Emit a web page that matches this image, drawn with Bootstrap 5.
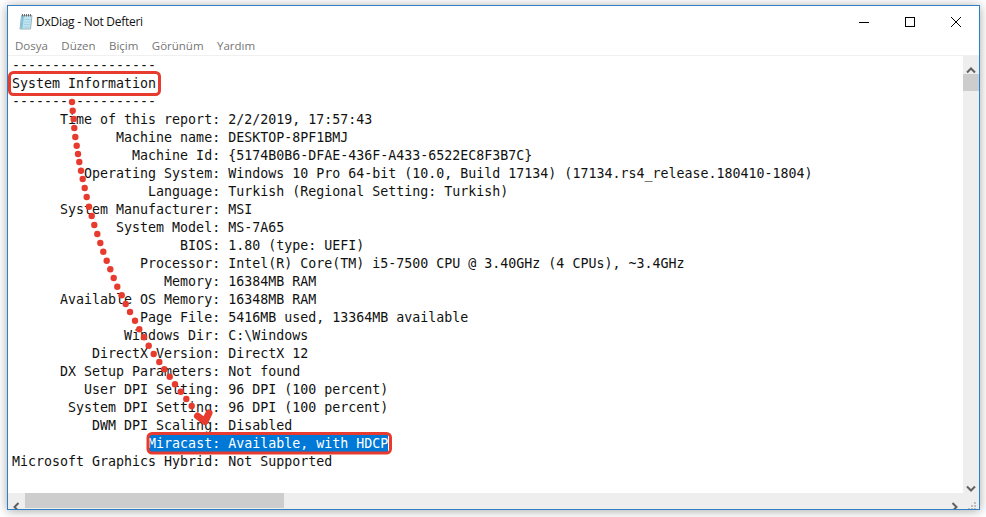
<!DOCTYPE html>
<html lang="tr">
<head>
<meta charset="utf-8">
<title>DxDiag - Not Defteri</title>
<link rel="stylesheet" href="https://cdn.jsdelivr.net/npm/bootstrap@5.3.0/dist/css/bootstrap.min.css">
<style>
html,body{height:517px;overflow:hidden;background:#fff}
body{padding:5px 6px 7px 7px;font-family:"Open Sans","Noto Sans",sans-serif}
.np-window{height:505px;border:1px solid #2f7fc6;box-shadow:0 1px 10px rgba(0,0,0,.35);background:#fff;position:relative}
.np-title{height:31px;padding-left:9px;font-size:12px;color:#111;letter-spacing:-.26px}
.np-logo{margin-right:3px}
.np-ctl{width:46px;height:31px}
.np-menu{height:18px;padding-left:7px;font-size:11.5px;color:#757575;gap:13.4px}
.np-sep{height:1px;background:#f0f0f0}
.np-body{min-height:0}
.np-text{font-family:"DejaVu Sans Mono","Liberation Mono",monospace;font-size:13.3px;line-height:18px;color:#111;margin:1px 0 0 4px;white-space:pre;overflow:hidden}
.np-sel{background:#0078d7;color:#fff;padding:1px 0}
.np-vbar{width:16px;background:#eee}
.np-hbar{height:16px;background:#eee}
.np-thumb-v{height:17px;background:#cdcdcd}
.np-thumb-h{width:259px;background:#cdcdcd;height:15px}
.np-arrow{width:16px;height:16px;flex:none}
.np-arrow-l{width:17px}
.np-vbar .np-arrow{height:18px}
.np-over{position:absolute;left:0;top:0;pointer-events:none}
</style>
</head>
<body>
<div class="np-window d-flex flex-column overflow-hidden">
  <div class="np-title d-flex align-items-center flex-shrink-0">
    <svg class="np-logo" width="16" height="18" viewBox="0 0 16 18"><path d="M4.500 2.500H15L13.500 16H3z" fill="#bfe4ef" stroke="#9db4bd"/><path d="M3.500 15.500L4.800 3H7L5.500 15.500z" fill="#7fc4da"/><path d="M7.500 6.500h6M7.200 9h6M7 11.500h6M6.700 14h6" stroke="#a2d4e4"/><path d="M5.500 1v2.500M7.500 1v2.500M9.500 1v2.500M11.500 1v2.500M13.500 1v2.500" stroke="#6b6b6b"/></svg>
    <span class="flex-grow-1">DxDiag - Not Defteri</span>
    <div class="np-ctl d-flex align-items-center justify-content-center"><svg width="10" height="10"><path d="M0 5.500h10" stroke="#000"/></svg></div>
    <div class="np-ctl d-flex align-items-center justify-content-center"><svg width="10" height="10"><rect x=".5" y=".5" width="9" height="9" fill="none" stroke="#000"/></svg></div>
    <div class="np-ctl d-flex align-items-center justify-content-center"><svg width="10" height="10"><path d="M0 0l10 10M10 0L0 10" stroke="#000"/></svg></div>
  </div>
  <div class="np-menu d-flex align-items-center flex-shrink-0"><span>Dosya</span><span>Düzen</span><span>Biçim</span><span>Görünüm</span><span>Yardım</span></div>
  <div class="np-sep flex-shrink-0"></div>
  <div class="np-body d-flex flex-grow-1">
    <div class="np-text flex-grow-1">------------------
System Information
------------------
      Time of this report: 2/2/2019, 17:57:43
             Machine name: DESKTOP-8PF1BMJ
               Machine Id: {5174B0B6-DFAE-436F-A433-6522EC8F3B7C}
         Operating System: Windows 10 Pro 64-bit (10.0, Build 17134) (17134.rs4_release.180410-1804)
                 Language: Turkish (Regional Setting: Turkish)
      System Manufacturer: MSI
             System Model: MS-7A65
                     BIOS: 1.80 (type: UEFI)
                Processor: Intel(R) Core(TM) i5-7500 CPU @ 3.40GHz (4 CPUs), ~3.4GHz
                   Memory: 16384MB RAM
      Available OS Memory: 16348MB RAM
                Page File: 5416MB used, 13364MB available
              Windows Dir: C:\Windows
          DirectX Version: DirectX 12
      DX Setup Parameters: Not found
         User DPI Setting: 96 DPI (100 percent)
       System DPI Setting: 96 DPI (100 percent)
          DWM DPI Scaling: Disabled
                 <span class="np-sel">Miracast: Available, with HDCP</span>
Microsoft Graphics Hybrid: Not Supported</div>
    <div class="np-vbar d-flex flex-column flex-shrink-0">
      <div class="np-arrow"><svg width="16" height="18"><path d="M4 11.500l4-4 4 4" fill="none" stroke="#606060" stroke-width="2"/></svg></div>
      <div class="np-thumb-v"></div>
      <div class="flex-grow-1"></div>
      <div class="np-arrow"><svg width="16" height="18"><path d="M4 6.500l4 4 4-4" fill="none" stroke="#606060" stroke-width="2"/></svg></div>
    </div>
  </div>
  <div class="np-hbar d-flex flex-shrink-0">
    <div class="np-arrow np-arrow-l"><svg width="16" height="16"><path d="M10.500 4l-4 4 4 4" fill="none" stroke="#606060" stroke-width="2"/></svg></div>
    <div class="np-thumb-h"></div>
    <div class="flex-grow-1"></div>
    <div class="np-arrow"><svg width="16" height="16"><path d="M5.500 4l4 4-4 4" fill="none" stroke="#606060" stroke-width="2"/></svg></div>
    <div class="np-arrow"><svg width="16" height="16"><path d="M11 3h2v2h-2zM8 6h2v2H8zM11 6h2v2h-2zM5 9h2v2H5zM8 9h2v2H8zM11 9h2v2h-2z" fill="#bdbdbd"/></svg></div>
  </div>
</div>
<svg class="np-over" width="986" height="517" viewBox="0 0 986 517">
  <rect x="9.500" y="72.500" width="150" height="22" rx="4" fill="none" stroke="#e63b2e" stroke-width="3"/>
  <rect x="148" y="433.500" width="242.500" height="19.500" rx="4" fill="none" stroke="#e63b2e" stroke-width="3"/>
  <g fill="#e63b2e">
    <circle cx="72" cy="102" r="3.200"/><circle cx="72.700" cy="110.700" r="3.200"/><circle cx="73.700" cy="119" r="3.200"/><circle cx="74.300" cy="128" r="3.200"/><circle cx="75.300" cy="137" r="3.200"/><circle cx="76.700" cy="145.700" r="3.200"/><circle cx="78" cy="154" r="3.200"/><circle cx="79.300" cy="162" r="3.200"/><circle cx="81" cy="170.700" r="3.200"/><circle cx="82.700" cy="179" r="3.200"/><circle cx="84.700" cy="188" r="3.200"/><circle cx="86.700" cy="197" r="3.200"/><circle cx="89" cy="206.700" r="3.200"/><circle cx="91.700" cy="216" r="3.200"/><circle cx="94.300" cy="225" r="3.200"/><circle cx="97.300" cy="234" r="3.200"/><circle cx="100.300" cy="243" r="3.200"/><circle cx="103.300" cy="251.700" r="3.200"/><circle cx="106.700" cy="260.700" r="3.200"/><circle cx="110.300" cy="269.300" r="3.200"/><circle cx="113.700" cy="278" r="3.200"/><circle cx="117.300" cy="286.700" r="3.200"/><circle cx="121.700" cy="295.300" r="3.200"/><circle cx="125.700" cy="304" r="3.200"/><circle cx="130" cy="312" r="3.200"/><circle cx="135" cy="320.700" r="3.200"/><circle cx="139.300" cy="329.300" r="3.200"/><circle cx="144" cy="337.300" r="3.200"/><circle cx="148.700" cy="345.700" r="3.200"/><circle cx="153.700" cy="354" r="3.200"/><circle cx="159.300" cy="362" r="3.200"/><circle cx="164.300" cy="369.300" r="3.200"/><circle cx="169.700" cy="376.700" r="3.200"/><circle cx="175" cy="384.300" r="3.200"/><circle cx="180.700" cy="391.700" r="3.200"/><circle cx="186.300" cy="399" r="3.200"/><circle cx="191.700" cy="406" r="3.200"/>
  </g>
  <path d="M197.500 416l7.500 5.500 4-8.500" fill="none" stroke="#e63b2e" stroke-width="7" stroke-linecap="round" stroke-linejoin="round"/>
</svg>
<script src="https://cdn.jsdelivr.net/npm/bootstrap@5.3.0/dist/js/bootstrap.bundle.min.js"></script>
</body>
</html>
